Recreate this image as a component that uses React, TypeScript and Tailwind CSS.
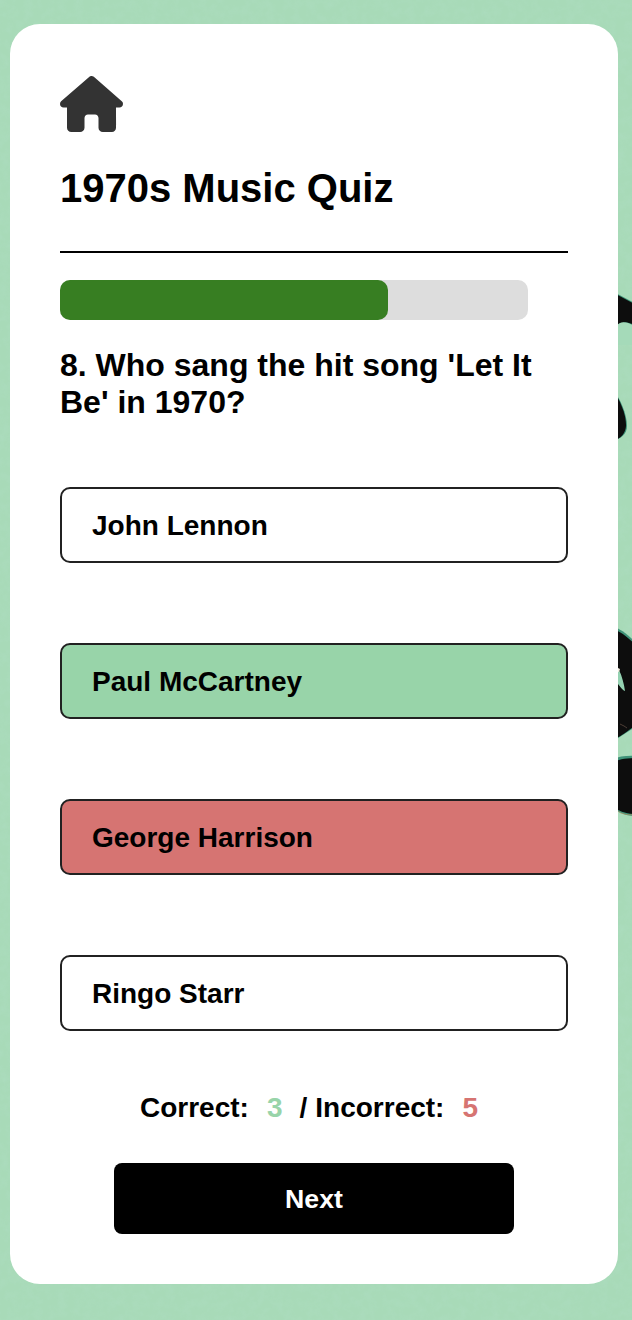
import React from "react";
import { FaHouse } from "react-icons/fa6";

type OptionState = "idle" | "correct" | "incorrect";

const options: { label: string; state: OptionState }[] = [
  { label: "John Lennon", state: "idle" },
  { label: "Paul McCartney", state: "correct" },
  { label: "George Harrison", state: "incorrect" },
  { label: "Ringo Starr", state: "idle" },
];

const optionColor: Record<OptionState, string> = {
  idle: "bg-white",
  correct: "bg-[#98d4a9]",
  incorrect: "bg-[#d67472]",
};

/* Paper-textured backdrop with the dark illustration showing beside the card. */
function Backdrop() {
  return (
    <svg className="absolute inset-0" width="632" height="1320" viewBox="0 0 632 1320" aria-hidden="true">
      <defs>
        <filter id="soften" x="0" y="0" width="100%" height="100%">
          <feGaussianBlur stdDeviation="0.6" />
        </filter>
        <filter id="paper" x="0" y="0" width="100%" height="100%">
          <feTurbulence type="fractalNoise" baseFrequency="0.12" numOctaves="3" seed="4" />
          <feColorMatrix values="0 0 0 0 0.5  0 0 0 0 0.78  0 0 0 0 0.68  0.7 0 0 0 -0.25" />
        </filter>
      </defs>
      <rect width="632" height="1320" filter="url(#paper)" opacity="0.4" />
      <g filter="url(#soften)">
        <g fill="#3f9379">
          <path d="M612 291L640 306V326L612 326Z" />
          <path d="M612 388C620 398 627 414 627 426C627 434 621 439 612 441Z" />
          <path d="M612 626C621 629 629 635 640 647V724L612 742Z" />
          <path d="M612 759C620 756 628 755 640 756V816C628 817 620 813 612 808Z" />
        </g>
        <g fill="#0a0d0c">
          <path d="M612 292L640 307V328C629 322 624 320 619 325L612 330Z" />
          <path d="M612 388C620 400 626 414 626 425C626 433 621 439 612 441Z" />
          <path d="M612 628C621 632 628 637 640 649V721C629 731 622 735 612 741Z" />
          <path d="M612 763C619 759 627 758 640 758V814C627 815 620 811 612 807Z" />
        </g>
        <path d="M616 326C621 320 627 321 640 329V345H616Z" fill="#a5dab9" />
        <path d="M612 667L619 670C622 676 624 684 625 691C622 690 619 685 612 676Z" fill="#95d2b2" />
        <path d="M616 667L620 669L619 672L616 671Z" fill="#f4eee0" />
        <path d="M620 724L624 726L627 728" stroke="#6c5249" strokeWidth="0.7" fill="none" />
        <path d="M616 810Q624 817 640 814" stroke="#a98b5e" strokeWidth="0.7" fill="none" />
      </g>
    </svg>
  );
}

export default function App() {
  return (
    <div className="relative h-[1320px] w-[632px] overflow-hidden bg-[#a8dab8] pt-6 pl-2.5 font-['Liberation_Sans',Arial,sans-serif] font-bold text-black">
      <Backdrop />
      <main className="relative flex h-[1260px] w-[608px] flex-col rounded-[30px] bg-white px-[50px] pt-[52px]">
        <a href="#" aria-label="Home" className="block w-[63px] text-[#333]">
          <FaHouse className="h-14 w-[63px]" />
        </a>
        <h1 className="mt-[33px] text-[40px] leading-[46px]">1970s Music Quiz</h1>
        <hr className="mt-10 border-t-2 border-black" />
        <div className="mt-[27px] h-10 w-[468px] rounded-[10px] bg-[#ddd]">
          <div className="h-10 w-[328px] rounded-[10px] bg-[#377e22]" />
        </div>
        <h2 className="mt-[27px] text-[32px] leading-[37px]">8. Who sang the hit song 'Let It Be' in 1970?</h2>
        <div className="mt-[66px] flex flex-col gap-20">
          {options.map((option) => (
            <button
              key={option.label}
              className={`h-[76px] w-full rounded-[10px] border-2 border-[#212121] pt-0.5 pl-[30px] text-left text-[28px] leading-8 ${optionColor[option.state]}`}
            >
              {option.label}
            </button>
          ))}
        </div>
        <p className="mt-[61px] flex pl-20 text-[28px] leading-8 whitespace-pre">
          <span>Correct:</span>
          <span className="ml-[18px] text-[#98d4a9]">3</span>
          <span className="ml-[17px]">/</span>
          <span className="ml-[8px]">Incorrect:</span>
          <span className="ml-[18px] text-[#d67472]">5</span>
        </p>
        <button className="mt-[39px] h-[71px] w-[400px] self-center rounded-lg bg-black text-[26.67px] text-white">
          Next
        </button>
      </main>
    </div>
  );
}
